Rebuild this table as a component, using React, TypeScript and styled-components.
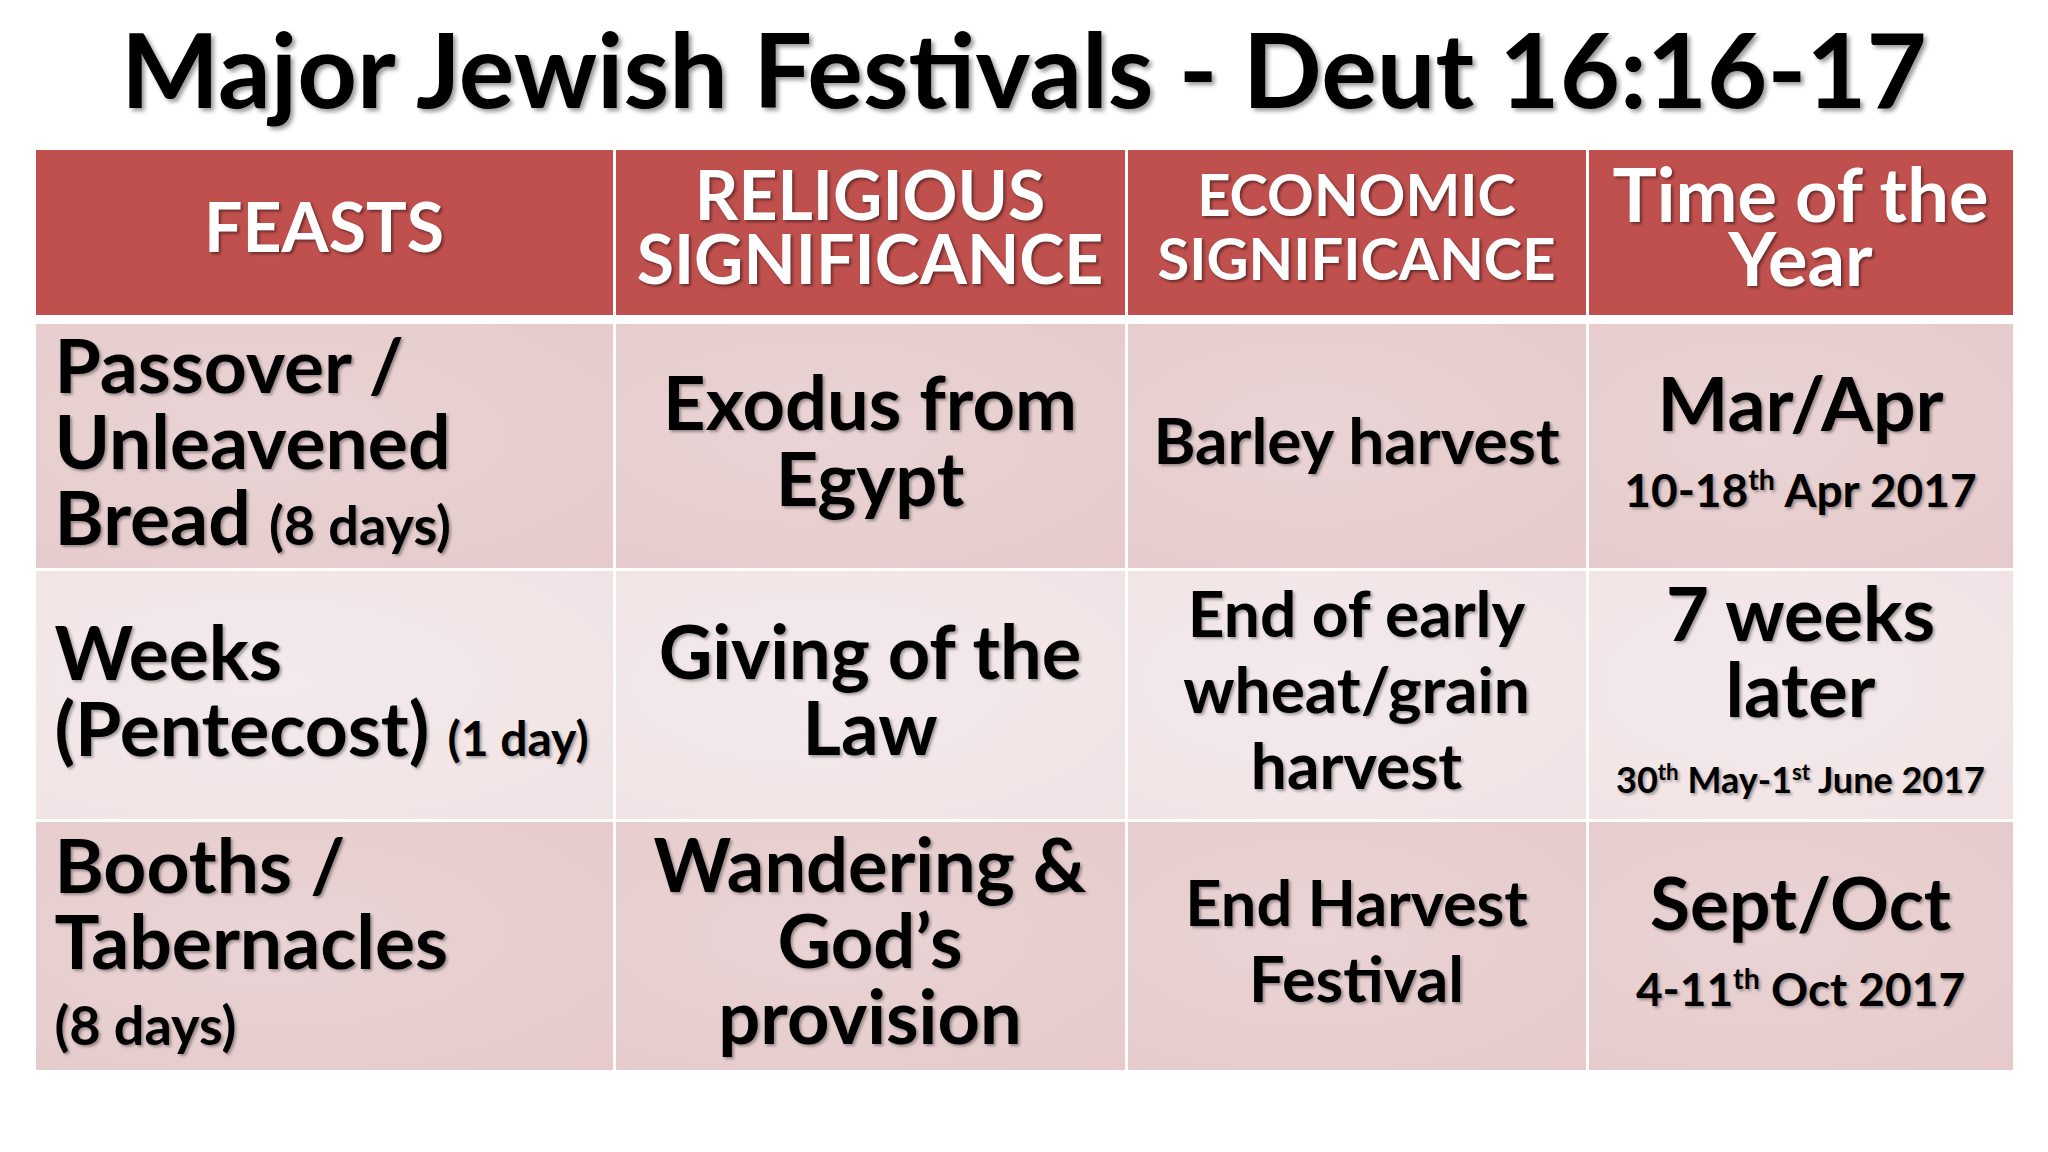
import styled, { createGlobalStyle } from "styled-components";
import type { ReactNode } from "react";

// Slide: Major Jewish Festivals table (PowerPoint-style banded table)

const COLUMNS = "577px 509px 458px 424px";

const GlobalStyle = createGlobalStyle`
  html, body {
    margin: 0;
    padding: 0;
    background: #ffffff;
  }
  body {
    font-family: Lato, "Open Sans", "Noto Sans", sans-serif;
  }
`;

const Page = styled.div`
  width: 2048px;
  height: 1152px;
  background: #ffffff;
  display: flex;
  flex-direction: column;
  align-items: center;
  overflow: hidden;
`;

const Title = styled.h1`
  margin: 0;
  height: 150px;
  padding-bottom: 15px;
  box-sizing: border-box;
  display: flex;
  align-items: center;
  justify-content: center;
  font-size: 104px;
  font-weight: 700;
  color: #000;
  line-height: 1;
  white-space: nowrap;
  text-shadow: 3px 3px 4px rgba(0, 0, 0, 0.4);
`;

const Table = styled.div`
  width: 1977px;
  display: flex;
  flex-direction: column;
  gap: 3px;
`;

const HeaderRow = styled.div`
  display: grid;
  grid-template-columns: ${COLUMNS};
  column-gap: 3px;
  height: 165px;
  margin-bottom: 6px;
`;

const HeaderCell = styled.div<{ $size: number }>`
  background: #c0504d;
  color: #ffffff;
  display: flex;
  flex-direction: column;
  justify-content: center;
  align-items: center;
  text-align: center;
  padding-bottom: 14px;
  box-sizing: border-box;
  font-size: ${({ $size }) => $size}px;
  font-weight: 700;
  line-height: 64px;
  white-space: nowrap;
  text-shadow: 2px 2px 3px rgba(0, 0, 0, 0.45);
`;

const BodyRow = styled.div<{ $height: number }>`
  display: grid;
  grid-template-columns: ${COLUMNS};
  column-gap: 3px;
  height: ${({ $height }) => $height}px;
`;

const Cell = styled.div<{ $tone: "dark" | "light"; $left?: boolean }>`
  background: ${({ $tone }) =>
    $tone === "dark"
      ? "radial-gradient(ellipse at 40% 45%, #ead4d5 0%, #e7cecf 60%, #e6cacc 100%)"
      : "radial-gradient(ellipse at 40% 45%, #f4eaeb 0%, #f2e6e7 60%, #f1e2e4 100%)"};
  display: flex;
  flex-direction: column;
  justify-content: center;
  align-items: ${({ $left }) => ($left ? "flex-start" : "center")};
  text-align: ${({ $left }) => ($left ? "left" : "center")};
  padding: 0 0 12px ${({ $left }) => ($left ? "19px" : "0")};
  box-sizing: border-box;
  color: #000;
  font-weight: 700;
  white-space: nowrap;
  text-shadow: 2px 2px 3px rgba(0, 0, 0, 0.35);
`;

const CellLine = styled.div<{ $size: number }>`
  font-size: ${({ $size }) => $size}px;
  line-height: 76px;
`;

const Small = styled.span<{ $size: number }>`
  font-size: ${({ $size }) => $size}px;
  line-height: 1;
`;

const Sup = styled.sup`
  font-size: 0.62em;
  vertical-align: 0;
  position: relative;
  top: -0.6em;
  line-height: 0;
`;

type Line = { text: ReactNode; size: number };
type CellData = { lines: Line[]; left?: boolean };
type RowData = { tone: "dark" | "light"; height: number; cells: CellData[] };

const headers: { lines: string[]; size: number }[] = [
  { lines: ["FEASTS"], size: 68 },
  { lines: ["RELIGIOUS", "SIGNIFICANCE"], size: 68 },
  { lines: ["ECONOMIC", "SIGNIFICANCE"], size: 58 },
  { lines: ["Time of the", "Year"], size: 74 },
];

const line = (text: ReactNode, size = 74): Line => ({ text, size });

const rows: RowData[] = [
  {
    tone: "dark",
    height: 244,
    cells: [
      {
        left: true,
        lines: [
          line("Passover /", 75),
          line("Unleavened", 75),
          line(
            <>
              Bread <Small $size={54}>(8 days)</Small>
            </>,
            75
          ),
        ],
      },
      { lines: [line("Exodus from"), line("Egypt")] },
      { lines: [line("Barley harvest", 64)] },
      {
        lines: [
          line("Mar/Apr", 75),
          line(
            <Small $size={46}>
              10-18<Sup>th</Sup> Apr 2017
            </Small>,
            75
          ),
        ],
      },
    ],
  },
  {
    tone: "light",
    height: 248,
    cells: [
      {
        left: true,
        lines: [
          line("Weeks", 75),
          line(
            <>
              (Pentecost) <Small $size={48}>(1 day)</Small>
            </>,
            75
          ),
        ],
      },
      { lines: [line("Giving of the"), line("Law")] },
      { lines: [line("End of early", 64), line("wheat/grain", 64), line("harvest", 64)] },
      {
        lines: [
          line("7 weeks"),
          line("later"),
          line(
            <Small $size={36}>
              30<Sup>th</Sup> May-1<Sup>st</Sup> June 2017
            </Small>
          ),
        ],
      },
    ],
  },
  {
    tone: "dark",
    height: 248,
    cells: [
      {
        left: true,
        lines: [
          line("Booths /", 75),
          line("Tabernacles", 75),
          line(<Small $size={54}>(8 days)</Small>, 75),
        ],
      },
      { lines: [line("Wandering &"), line("God’s"), line("provision")] },
      { lines: [line("End Harvest", 63), line("Festival", 63)] },
      {
        lines: [
          line("Sept/Oct", 73),
          line(
            <Small $size={46}>
              4-11<Sup>th</Sup> Oct 2017
            </Small>,
            73
          ),
        ],
      },
    ],
  },
];

export default function App() {
  return (
    <>
      <GlobalStyle />
      <Page>
        <Title>Major Jewish Festivals - Deut 16:16-17</Title>
        <Table>
          <HeaderRow>
            {headers.map((h, i) => (
              <HeaderCell key={i} $size={h.size}>
                {h.lines.map((l) => (
                  <div key={l}>{l}</div>
                ))}
              </HeaderCell>
            ))}
          </HeaderRow>
          {rows.map((row, r) => (
            <BodyRow key={r} $height={row.height}>
              {row.cells.map((cell, c) => (
                <Cell key={c} $tone={row.tone} $left={cell.left}>
                  {cell.lines.map((ln, k) => (
                    <CellLine key={k} $size={ln.size}>
                      {ln.text}
                    </CellLine>
                  ))}
                </Cell>
              ))}
            </BodyRow>
          ))}
        </Table>
      </Page>
    </>
  );
}
